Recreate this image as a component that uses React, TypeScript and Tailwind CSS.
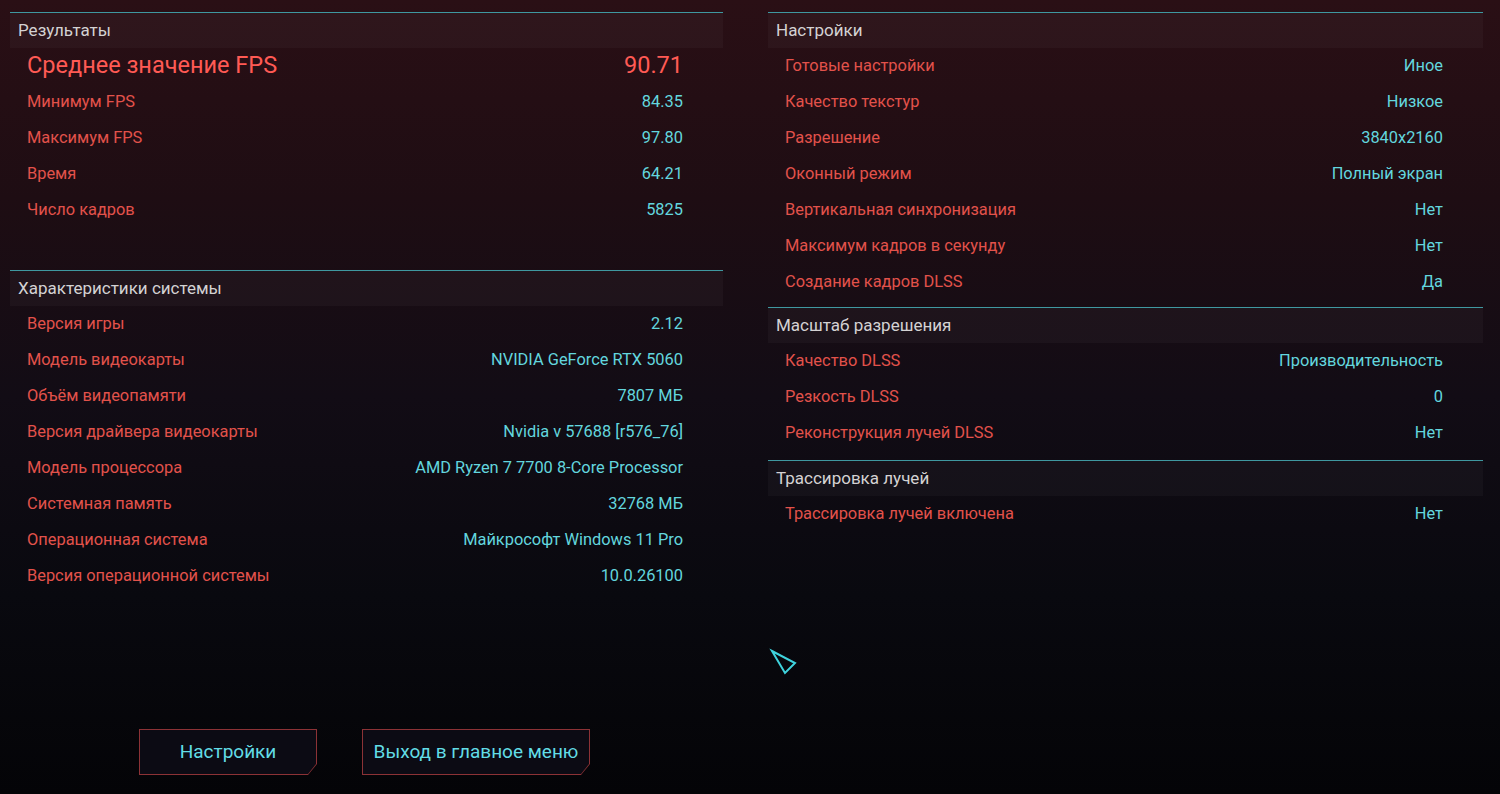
import React from 'react';

type Row = { label: string; value: string };

const results: Row[] = [
  { label: 'Минимум FPS', value: '84.35' },
  { label: 'Максимум FPS', value: '97.80' },
  { label: 'Время', value: '64.21' },
  { label: 'Число кадров', value: '5825' },
];

const system: Row[] = [
  { label: 'Версия игры', value: '2.12' },
  { label: 'Модель видеокарты', value: 'NVIDIA GeForce RTX 5060' },
  { label: 'Объём видеопамяти', value: '7807 МБ' },
  { label: 'Версия драйвера видеокарты', value: 'Nvidia v 57688 [r576_76]' },
  { label: 'Модель процессора', value: 'AMD Ryzen 7 7700 8-Core Processor' },
  { label: 'Системная память', value: '32768 МБ' },
  { label: 'Операционная система', value: 'Майкрософт Windows 11 Pro' },
  { label: 'Версия операционной системы', value: '10.0.26100' },
];

const settings: Row[] = [
  { label: 'Готовые настройки', value: 'Иное' },
  { label: 'Качество текстур', value: 'Низкое' },
  { label: 'Разрешение', value: '3840x2160' },
  { label: 'Оконный режим', value: 'Полный экран' },
  { label: 'Вертикальная синхронизация', value: 'Нет' },
  { label: 'Максимум кадров в секунду', value: 'Нет' },
  { label: 'Создание кадров DLSS', value: 'Да' },
];

const scaling: Row[] = [
  { label: 'Качество DLSS', value: 'Производительность' },
  { label: 'Резкость DLSS', value: '0' },
  { label: 'Реконструкция лучей DLSS', value: 'Нет' },
];

const rt: Row[] = [{ label: 'Трассировка лучей включена', value: 'Нет' }];

function Header({ title }: { title: string }) {
  return (
    <div className="flex h-[36px] items-center border-t border-[#3f98a0] bg-white/[0.03] pl-[8px] text-[17px] text-[#d4d2d3]">
      {title}
    </div>
  );
}

function Rows({ rows }: { rows: Row[] }) {
  return (
    <>
      {rows.map((r) => (
        <div
          key={r.label}
          className="flex h-[36px] items-center justify-between pr-[40px] pl-[17px] text-[16.4px]"
        >
          <span className="text-[#e2524b]">{r.label}</span>
          <span className="text-[#63d6de]">{r.value}</span>
        </div>
      ))}
    </>
  );
}

function CutButton({ label, width }: { label: string; width: string }) {
  return (
    <div
      className={`h-[46px] bg-[#8c3236] p-px [clip-path:polygon(0_0,100%_0,100%_calc(100%-11px),calc(100%-9px)_100%,0_100%)] ${width}`}
    >
      <div className="flex h-full w-full items-center justify-center bg-[#0c0b14] text-[19px] text-[#62dde6] [clip-path:polygon(0_0,100%_0,100%_calc(100%-10px),calc(100%-8px)_100%,0_100%)]">
        {label}
      </div>
    </div>
  );
}

export default function App() {
  return (
    <div
      className="relative flex h-[794px] w-[1500px] overflow-hidden bg-[linear-gradient(180deg,#2a0f15_0%,#1e0d13_25%,#120c15_50%,#09090f_75%,#040407_100%)] pt-[12px]"
      style={{ fontFamily: 'Roboto, "Noto Sans", sans-serif' }}
    >
      {/* Left column */}
      <div className="ml-[10px] flex w-[713px] flex-col">
        <Header title="Результаты" />
        <div className="flex h-[36px] items-center justify-between pr-[40px] pl-[17px]">
          <span className="text-[23.5px] text-[#ff5a54]">Среднее значение FPS</span>
          <span className="text-[23.5px] text-[#ff5a54]">90.71</span>
        </div>
        <Rows rows={results} />

        <div className="mt-[42px]">
          <Header title="Характеристики системы" />
          <Rows rows={system} />
        </div>

        <div className="mt-[135px] ml-[129px] flex gap-[45px]">
          <CutButton label="Настройки" width="w-[178px]" />
          <CutButton label="Выход в главное меню" width="w-[228px]" />
        </div>
      </div>

      {/* Right column */}
      <div className="ml-[45px] flex w-[715px] flex-col">
        <Header title="Настройки" />
        <Rows rows={settings} />
        <div className="mt-[7px]">
          <Header title="Масштаб разрешения" />
          <Rows rows={scaling} />
        </div>
        <div className="mt-[9px]">
          <Header title="Трассировка лучей" />
          <Rows rows={rt} />
        </div>
      </div>

      {/* Cursor */}
      <svg
        className="absolute top-[648px] left-[768px]"
        width="32"
        height="30"
        viewBox="0 0 32 30"
        fill="none"
      >
        <path
          d="M4 3 L27 15 L17 25 Z"
          stroke="#3fd3dd"
          strokeWidth="2"
          strokeLinejoin="miter"
        />
      </svg>
    </div>
  );
}
